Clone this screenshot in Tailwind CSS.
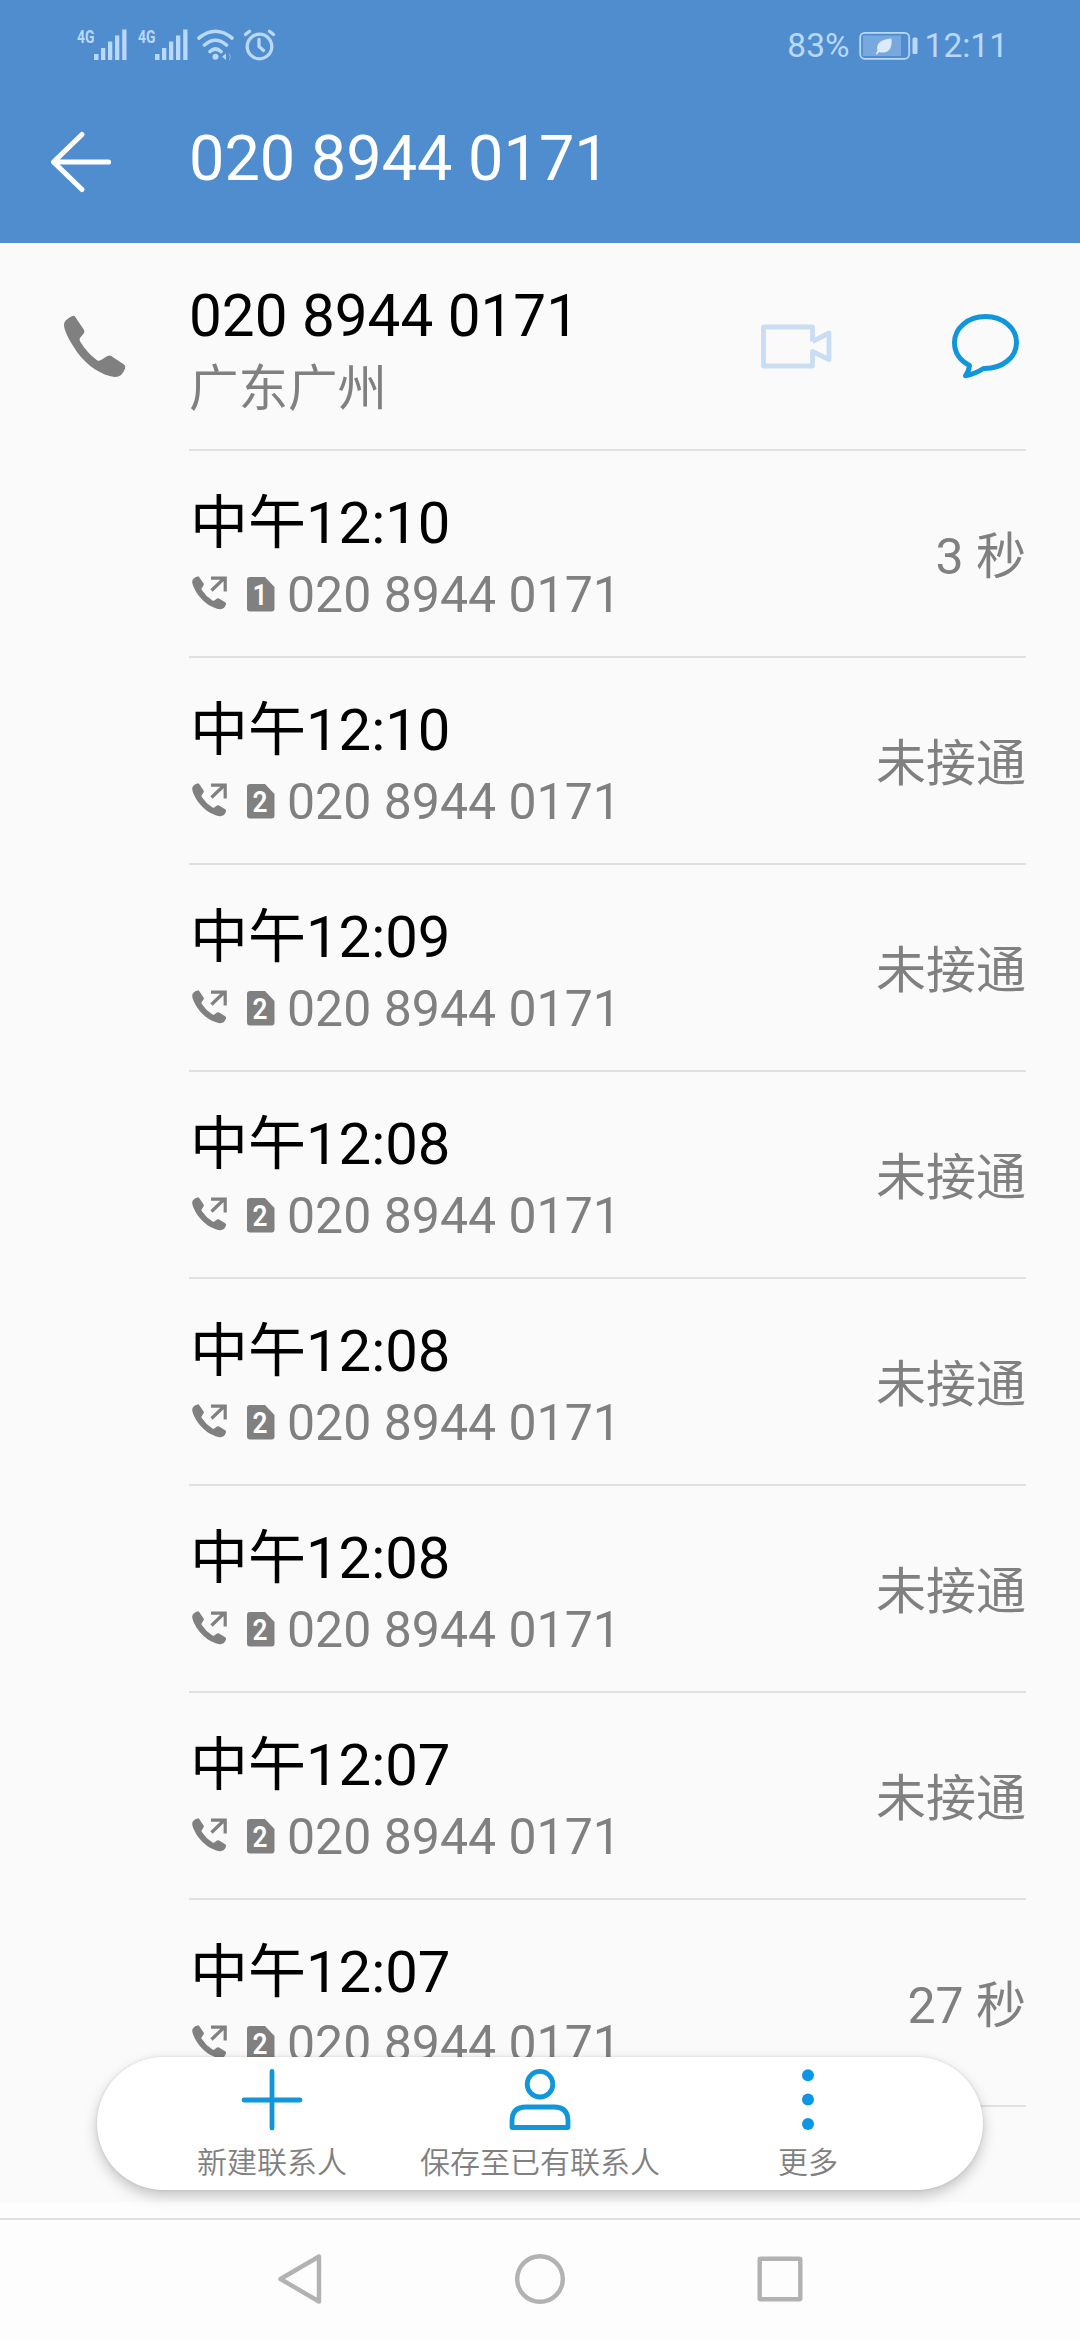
<!DOCTYPE html>
<html lang="zh-CN">
<head>
<meta charset="utf-8">
<title>020 8944 0171</title>
<script src="https://cdn.jsdelivr.net/npm/@tailwindcss/browser@4"></script>
</head>
<body class="relative flex h-[2340px] w-[1080px] flex-col overflow-hidden bg-[#fafafa] font-[Roboto,'Noto_Sans_CJK_SC',sans-serif] text-[#808080]">
<svg class="hidden">
  <symbol id="signal" viewBox="0 0 36 32"><path fill="currentColor" d="M0 26h4.5v6H0zM7 20h4.300v12H7zM14 13.500h4.300V32H14zM21 7.500h4.300V32H21zM28.200 1.500h4.300V32h-4.300z"/></symbol>
  <symbol id="outgoing" viewBox="0 0 36 35"><path fill="currentColor" d="M5.500.5Q6.500 0 7.200 1L11.600 7.600Q12.200 8.600 11.500 9.600L9.700 12.200Q9.200 13 9.800 14Q14 20.500 20.500 24.600Q21.500 25 22.300 24.500L25 22.600Q26 22 27 22.500L33.200 26.200Q34.400 27 34 28.300Q32.800 33.500 27.500 33.200C19 31.500 12 26.500 7 20C3 14.500 0 8.500.2 5.200Q.6 2 5.500.5Z"/><path fill="none" stroke="currentColor" stroke-width="3.200" d="M19.500 14.500L32.500 2M19 2.100H33.200V15.500"/></symbol>
</svg>

<header class="flex h-[243px] shrink-0 flex-col bg-[#4f8dcf]">
  <div class="flex h-[92px] items-start justify-between pt-[28px] pr-[72px] pl-[77px] text-[#b9d8fa]">
    <div class="flex items-start">
      <span class="w-[17px] origin-left scale-x-75 text-[18.500px] leading-[18px] font-bold">4G</span>
      <svg class="h-8 w-9"><use href="#signal"/></svg>
      <span class="ml-[8px] w-[17px] origin-left scale-x-75 text-[18.500px] leading-[18px] font-bold">4G</span>
      <svg class="h-8 w-9"><use href="#signal"/></svg>
      <svg class="ml-[5px] h-9 w-10" viewBox="0 0 40 36" fill="none" stroke="currentColor" stroke-width="3.600" stroke-linecap="round"><path d="M3 10Q19.500-3.500 36 10M8.500 17Q19.500 7.500 30.500 17M14 23.500Q19.500 18.500 25 23.500"/><circle cx="19.500" cy="28.800" r="3" fill="currentColor" stroke="none"/><path d="M26 28.700L30 25.500V32Z" fill="currentColor" stroke="none"/><path d="M33.500 26Q35.500 29 33.500 32" stroke-width="1" opacity=".5"/></svg>
      <svg class="ml-[5px] h-9 w-9" viewBox="0 0 36 36" fill="none" stroke="currentColor" stroke-width="3.300" stroke-linecap="round"><circle cx="18.500" cy="18.500" r="12.300"/><path d="M18 11.500V18.500L22.500 22.500M4.500 6.500L8.500 3.200M28.500 3.200L32.500 6.500"/></svg>
    </div>
    <div class="flex items-start">
      <span class="text-[33.500px] leading-9">83%</span>
      <svg class="ml-[9px] h-9 w-[60px]" viewBox="0 0 60 36"><rect x="1.200" y="4.800" width="49" height="26" rx="4.500" fill="none" stroke="currentColor" stroke-width="1.800"/><rect x="4" y="7.500" width="38" height="20.500" fill="currentColor" opacity=".38"/><path fill="#dceafb" d="M32.500 10.500C22 11 16.500 16 18.500 22.500L16.500 26L18 26.500L20 24C30 26.500 33.500 20 32.500 10.500Z"/><rect x="53.500" y="9.500" width="5" height="16.500" rx="1.500" fill="currentColor"/></svg>
      <span class="ml-[6px] text-[33.500px] leading-9">12:11</span>
    </div>
  </div>
  <div class="flex h-[140px] items-center pl-[48px] text-white">
    <svg class="h-16 w-16" viewBox="0 0 64 64" fill="none" stroke="currentColor" stroke-width="5.200" stroke-linecap="round" stroke-linejoin="round"><path d="M34 4.500L5.500 32L34 59.500M6 32H60.500"/></svg>
    <h1 class="-mt-[6px] ml-[77px] text-[63px] leading-[72px]">020 8944 0171</h1>
  </div>
</header>

<section class="flex h-[208px] shrink-0">
  <div class="w-[189px] pt-[69px] pl-[60px]">
    <svg class="h-[70px] w-[70px]" viewBox="0 0 70 70"><path fill="currentColor" d="M12 4.300Q14.200 3 15.500 5.200L24 18Q25 19.800 23.700 21.500L20 26Q19 27.500 20 29.300Q27 41 37 48.300Q39 49.500 41 48L47.500 44Q49.500 42.800 51.200 44L64 52.500Q66 54.200 65 56.500Q62 65.500 54.500 65C42 63.500 27 54 17 40C9 28 4 18.500 4 13C4 9 7.500 6.500 12 4.300Z"/></svg>
  </div>
  <div class="mr-[54px] flex flex-1 justify-between border-b-2 border-[#e0e0e0]">
    <div class="pt-[41px]">
      <div class="text-[58.400px] leading-[64px] text-black">020 8944 0171</div>
      <div class="mt-[13px] text-[49.500px] leading-[56px]">广东广州</div>
    </div>
    <div class="flex gap-[110px] pt-[67px] pr-[1px]">
      <svg class="h-[70px] w-[80px]" viewBox="755 310 80 70" fill="none" stroke="#c9def3" stroke-width="4.800" stroke-linejoin="round"><path d="M812.500 341.500V327H763.500V366H812.500V351.500L829 359.500V333L812.500 341.500"/></svg>
      <svg class="h-[70px] w-[80px]" viewBox="945 310 80 70" fill="none" stroke="#1296db" stroke-width="5" stroke-linejoin="round"><path d="M969.500 365.500C959 360 954.500 352 954.500 342.500C954.500 328 968 316.500 985.500 316.500C1003 316.500 1016.500 328 1016.500 342.500C1016.500 357 1003 368.800 983.500 368.500Q975 374 965.500 375.800Q969 371 969.500 365.500Z"/></svg>
    </div>
  </div>
</section>

<main id="calls" class="flex flex-col"></main>

<div class="absolute top-[2202px] left-0 h-[16px] w-full bg-[#fdfdfd]"></div>
<nav class="absolute top-[2057px] left-[97px] flex h-[133px] w-[886px] justify-center rounded-full bg-white text-[30px] leading-[36px] font-[350] shadow-[0_6px_14px_rgba(0,0,0,0.22),0_0_3px_rgba(0,0,0,0.12)]">
  <div class="flex w-[268px] flex-col items-center pt-[9px]">
    <svg class="h-[68px] w-[68px]" viewBox="0 0 68 68" stroke="#1296db" stroke-width="4.800" stroke-linecap="round"><path d="M34 5.500V62M6 34H62"/></svg>
    <span class="mt-[11px]">新建联系人</span>
  </div>
  <div class="flex w-[268px] flex-col items-center pt-[9px]">
    <svg class="h-[68px] w-[68px]" viewBox="0 0 68 68" fill="none" stroke="#1296db" stroke-width="4.800" stroke-linejoin="round"><circle cx="34" cy="18.200" r="12.800"/><path d="M6 61.500V55Q6 41 20 41H48Q62 41 62 55V61.500Z"/></svg>
    <span class="mt-[11px] whitespace-nowrap">保存至已有联系人</span>
  </div>
  <div class="flex w-[268px] flex-col items-center pt-[9px]">
    <svg class="h-[68px] w-[68px]" viewBox="0 0 68 68" fill="#0b97e5"><circle cx="34" cy="9.200" r="6"/><circle cx="34" cy="33.500" r="6"/><circle cx="34" cy="58" r="6"/></svg>
    <span class="mt-[11px]">更多</span>
  </div>
</nav>

<footer class="absolute bottom-0 left-0 flex h-[122px] w-full items-center justify-center gap-[180px] border-t-2 border-[#e0e0e0] bg-[#fdfdfd] pb-[2px]">
  <svg class="h-[60px] w-[60px]" viewBox="0 0 60 60" fill="none" stroke="#b2b2b2" stroke-width="4.400" stroke-linejoin="round"><path d="M49 7.500V52.500L10.500 30Z"/></svg>
  <svg class="h-[60px] w-[60px]" viewBox="0 0 60 60" fill="none" stroke="#b2b2b2" stroke-width="4.400"><circle cx="30" cy="30" r="22.800"/></svg>
  <svg class="h-[60px] w-[60px]" viewBox="0 0 60 60" fill="none" stroke="#b2b2b2" stroke-width="4.400" stroke-linejoin="round"><rect x="9.700" y="9.700" width="40.600" height="40.600" rx="1"/></svg>
</footer>

<script>
const calls = [
  ['12:10', 1, '3 秒'],
  ['12:10', 2, '未接通'],
  ['12:09', 2, '未接通'],
  ['12:08', 2, '未接通'],
  ['12:08', 2, '未接通'],
  ['12:08', 2, '未接通'],
  ['12:07', 2, '未接通'],
  ['12:07', 2, '27 秒'],
];
document.getElementById('calls').innerHTML = calls.map(([time, sim, status]) => `
<div class="mr-[54px] ml-[189px] flex h-[207px] shrink-0 items-center justify-between border-b-2 border-[#e0e0e0]">
  <div class="h-full pt-[40px] pl-px">
    <div class="text-[58px] leading-[64px] text-black">中午${time}</div>
    <div class="mt-[12px] flex pl-[2px]">
      <svg class="mt-[9px] h-[35px] w-[36px]"><use href="#outgoing"/></svg>
      <svg class="mt-[10px] ml-[19px] h-[35px] w-[28px]" viewBox="0 0 28 35"><path fill="#808080" d="M3 0H18L27.500 10V31.500Q27.500 34.500 24.500 34.500H3Q0 34.500 0 31.500V3Q0 0 3 0Z"/><text x="13" y="28" text-anchor="middle" font-family="Roboto" font-size="29" font-weight="600" fill="#fff" textLength="15" lengthAdjust="spacingAndGlyphs">${sim}</text></svg>
      <div class="ml-[12px] text-[50px] leading-[56px]">020 8944 0171</div>
    </div>
  </div>
  <div class="mt-[6px] text-[50px] leading-[56px]">${status}</div>
</div>`).join('');
</script>
</body>
</html>
